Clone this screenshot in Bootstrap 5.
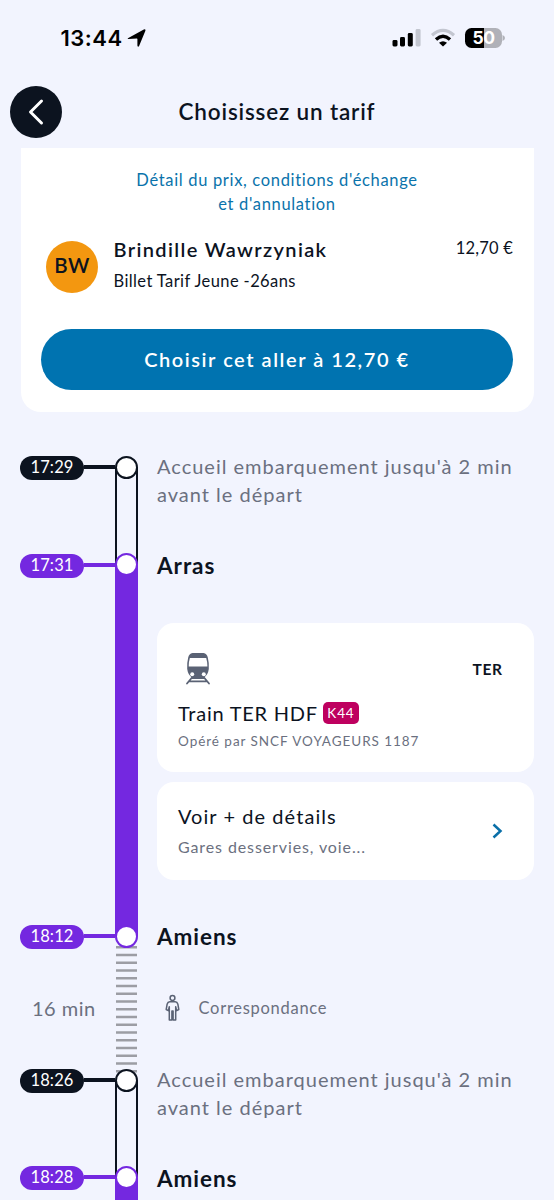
<!DOCTYPE html>
<html lang="fr">
<head>
<meta charset="utf-8">
<meta name="viewport" content="width=device-width, initial-scale=1">
<title>Choisissez un tarif</title>
<link rel="stylesheet" href="https://cdn.jsdelivr.net/npm/bootstrap@5.3.0/dist/css/bootstrap.min.css">
<style>
  :root { --ink:#0c131f; --violet:#7428e0; --blue:#0073b0; --slate:#6b7080; --page:#f2f4fe; }
  body { background:var(--page); color:var(--ink); font-family:Lato,"Open Sans",sans-serif; height:1200px; overflow:hidden; }
  .status { height:75px; padding:0 49px 0 60.5px; color:#000; }
  .clock { font:600 22px/26px Inter,sans-serif; letter-spacing:.5px; }
  .battery { font:700 17.5px/20px Inter,sans-serif; letter-spacing:-.4px; width:37px; height:20px; border-radius:6.5px; background:linear-gradient(90deg,#000 51%,#b0b1b8 51%); color:#fff; }
  .topbar { height:73px; padding:0 10px; grid-template-columns:52px 1fr 52px; }
  .back { width:52px; height:52px; background:var(--ink); }
  .title { font-size:22.5px; font-weight:600; letter-spacing:.83px; line-height:28px; }
  .fare { margin:0 20.5px; height:263.5px; padding:21px 20.5px 0; border-radius:0 0 20px 20px; }
  .conditions { color:#0a73ab; font-size:16.5px; line-height:23.5px; letter-spacing:.67px; }
  .passenger { margin-top:21.5px; padding-left:5px; height:55px; }
  .avatar { width:52px; height:52px; margin:3px 15.5px 0 0; padding-bottom:2px; background:#f39710; font-size:20.5px; font-weight:600; letter-spacing:.5px; }
  .who { font-size:20px; font-weight:600; line-height:24px; letter-spacing:1.35px; margin-top:-1px; }
  .fare-name { font-size:16.5px; line-height:22px; letter-spacing:.4px; margin-top:9px; }
  .price { font-size:16.5px; line-height:20px; letter-spacing:.2px; }
  .choose { margin-top:36px; height:61.5px; background:var(--blue); font-size:20px; font-weight:600; letter-spacing:1.55px; }
  .journey { margin:44.5px 20.5px 0 20px; }
  .stop-row { display:grid; grid-template-columns:95px 23px 1fr; }
  .pill { width:64px; height:23.5px; font-size:16.5px; line-height:23px; letter-spacing:.15px; background:var(--tone); flex:none; }
  .link-bar { height:4px; background:var(--tone); }
  .rail { position:relative; }
  .rail::before { content:""; position:absolute; left:0; right:0; top:11px; bottom:-11px; }
  .knob { position:relative; width:23px; height:23px; border:2.5px solid var(--tone); background:#fff; }
  .dark { --tone:var(--ink); } .violet { --tone:var(--violet); }
  .tube::before { border:solid var(--ink); border-width:0 2px; }
  .full::before { background:var(--violet); }
  .ties svg { position:absolute; left:1px; top:20.5px; }
  .body-col { padding-left:19px; }
  .note { color:var(--slate); font-size:20px; line-height:28.2px; letter-spacing:1px; margin-top:-4.5px; }
  .city { font-size:22.5px; font-weight:700; line-height:28px; letter-spacing:.95px; }
  .leg { border-radius:17px; padding:0 21px; }
  .product { font-size:20px; line-height:24px; letter-spacing:.75px; }
  .line-tag { background:#be005f; width:36.5px; height:22px; border-radius:5px; font-size:13.5px; letter-spacing:.9px; margin-left:5px; }
  .operator { color:var(--slate); font-size:13.5px; line-height:18px; letter-spacing:.96px; }
  .brand { font-size:15.5px; font-weight:700; letter-spacing:.6px; padding-top:2px; }
  .more { font-size:20px; line-height:26px; letter-spacing:1.06px; }
  .served { color:var(--slate); font-size:16px; line-height:22px; letter-spacing:.89px; }
  .wait { color:var(--slate); font-size:20px; line-height:24px; letter-spacing:.5px; }
  .change { color:var(--slate); font-size:16.5px; line-height:24px; letter-spacing:.72px; }
</style>
</head>
<body>
<header>
  <div class="status d-flex align-items-center">
    <span class="clock">13:44</span>
    <svg style="margin-left:4.5px" width="20" height="20" viewBox="0 0 20 20"><path d="M.9 10.200 16.800 1.400q2.200-.9 1.600 1.300L12.100 18q-1.200 1.800-1.700-.5V11q0-.6-.6-.6L1.500 11q-1.500-.2-.6-.8Z" fill="#000"/></svg>
    <svg class="ms-auto" width="29" height="19" viewBox="0 0 29 19"><g fill="#000"><rect x=".5" y="12" width="5" height="6.5" rx="1.4"/><rect x="8" y="9" width="5" height="9.5" rx="1.4"/><rect x="15.8" y="5" width="5" height="13.500" rx="1.4"/></g><rect x="23.600" y="1" width="5" height="17.500" rx="1.4" fill="#c3c6d0"/></svg>
    <svg style="margin-left:9px" width="26" height="19" viewBox="0 0 26 19" fill="none"><path d="M2 7.200Q13-2.500 24 7.200" stroke="#c3c6d0" stroke-width="3.200"/><path d="M6 11.400Q13 5 20 11.400" stroke="#000" stroke-width="3.400"/><path d="M9 14.800Q13 11.600 17 14.800L13 18.600Z" fill="#000"/></svg>
    <div class="battery d-flex align-items-center justify-content-center" style="margin-left:9px">50</div>
    <svg width="3" height="8" viewBox="0 0 3 8"><path d="M.5 1Q3 2 3 4T.5 7Z" fill="#b0b1b8"/></svg>
  </div>
  <div class="topbar d-grid align-items-center">
    <button class="back btn p-0 border-0 rounded-circle d-flex align-items-center justify-content-center" aria-label="Retour">
      <svg width="20" height="28" viewBox="0 0 20 28" fill="none" stroke="#fff" stroke-width="3" stroke-linecap="round" stroke-linejoin="round"><path d="M15.500 3 4.500 14l11 11"/></svg>
    </button>
    <h1 class="title text-center m-0">Choisissez un tarif</h1>
  </div>
</header>
<main>
  <section class="fare bg-white">
    <div class="conditions text-center">Détail du prix, conditions d'échange<br>et d'annulation</div>
    <div class="passenger d-flex align-items-start">
      <div class="avatar rounded-circle d-flex align-items-center justify-content-center">BW</div>
      <div><div class="who">Brindille Wawrzyniak</div><div class="fare-name">Billet Tarif Jeune -26ans</div></div>
      <div class="price ms-auto">12,70 €</div>
    </div>
    <button class="choose btn w-100 rounded-pill border-0 text-white p-0">Choisir cet aller à 12,70 €</button>
  </section>

  <section class="journey">
    <div class="stop-row" style="height:97px">
      <div class="dark d-flex align-items-start"><span class="pill rounded-pill text-white text-center">17:29</span><span class="link-bar flex-fill" style="margin-top:9px"></span></div>
      <div class="rail tube dark"><div class="knob rounded-circle"></div></div>
      <div class="body-col"><p class="note mb-0">Accueil embarquement jusqu'à 2 min<br>avant le départ</p></div>
    </div>
    <div class="stop-row" style="height:372px">
      <div class="violet d-flex align-items-start"><span class="pill rounded-pill text-white text-center" style="margin-top:1px">17:31</span><span class="link-bar flex-fill" style="margin-top:9.500px"></span></div>
      <div class="rail full violet"><div class="knob rounded-circle"></div></div>
      <div class="body-col">
        <div class="city" style="margin:-1px 0 42.500px">Arras</div>
        <div class="leg bg-white" style="height:149px;padding-top:29px">
          <div class="d-flex justify-content-between align-items-center" style="height:34px;margin-right:10px">
            <svg style="margin-left:7px" width="27" height="34" viewBox="0 0 27 34">
              <path d="M7.500 1h11q3.500.5 4.300 4.500 1.500 6 1 11.500-.8 6-4.800 8.500H7q-4-2.500-4.800-8.500-.5-5.500 1-11.500Q4 1.500 7.500 1Z" fill="#5a6274"/>
              <path d="M4.900 6h16.300q1.300 4 1.200 8.500H3.700Q3.500 10 4.900 6Z" fill="#fff"/>
              <circle cx="7.200" cy="22.300" r="2" fill="#fff"/><circle cx="18.800" cy="22.300" r="2" fill="#fff"/>
              <path d="M7 25.500 2 31.500M19 25.500l5 6M7 26h12M4.500 29.300h17" stroke="#5a6274" stroke-width="1.800" stroke-linecap="round"/>
            </svg>
            <span class="brand">TER</span>
          </div>
          <div class="product d-flex align-items-center" style="margin-top:15.500px">Train TER HDF<span class="line-tag text-white d-flex align-items-center justify-content-center">K44</span></div>
          <div class="operator" style="margin-top:6.500px">Opéré par SNCF VOYAGEURS 1187</div>
        </div>
        <div class="leg bg-white d-flex align-items-center justify-content-between" style="height:98px;margin-top:10.500px">
          <div style="margin-top:-2px"><div class="more">Voir + de détails</div><div class="served" style="margin-top:7px">Gares desservies, voie...</div></div>
          <svg style="margin-right:9px" width="13" height="18" viewBox="0 0 13 18" fill="none" stroke="#0a6fa8" stroke-width="2.500"><path d="m2.500 2.500 7 6.500-7 6.500"/></svg>
        </div>
      </div>
    </div>
    <div class="stop-row" style="height:144px">
      <div class="violet"><div class="d-flex align-items-start"><span class="pill rounded-pill text-white text-center">18:12</span><span class="link-bar flex-fill" style="margin-top:9px"></span></div><div class="wait" style="margin:47px 0 0 12px">16 min</div></div>
      <div class="rail ties violet"><svg width="21" height="127" viewBox="0 0 21 127"><path d="M10.500 0v127" stroke="#9c9da4" stroke-width="21" stroke-dasharray="2.400 5.350"/></svg><div class="knob rounded-circle"></div></div>
      <div class="body-col">
        <div class="city" style="margin-top:-2.500px">Amiens</div>
        <div class="d-flex align-items-center" style="margin-top:43.500px;padding-left:8px">
          <svg width="15" height="28" viewBox="0 0 15 28" fill="none" stroke="#5a6274" stroke-width="1.500" stroke-linejoin="round" stroke-linecap="round"><circle cx="7.500" cy="4" r="2.400"/><path d="M4.800 7.800h5.400q2 .1 2.700 2.500l.9 5.200-2.200 1.200-.9-4V26H8.100v-9H6.900v9H4.300V12.700l-.9 4-2.200-1.200.9-5.200q.7-2.400 2.700-2.500Z"/></svg>
          <span class="change" style="margin-left:18.500px">Correspondance</span>
        </div>
      </div>
    </div>
    <div class="stop-row" style="height:97px">
      <div class="dark d-flex align-items-start"><span class="pill rounded-pill text-white text-center">18:26</span><span class="link-bar flex-fill" style="margin-top:9px"></span></div>
      <div class="rail tube dark"><div class="knob rounded-circle"></div></div>
      <div class="body-col"><p class="note mb-0">Accueil embarquement jusqu'à 2 min<br>avant le départ</p></div>
    </div>
    <div class="stop-row" style="height:80px">
      <div class="violet d-flex align-items-start"><span class="pill rounded-pill text-white text-center">18:28</span><span class="link-bar flex-fill" style="margin-top:9px"></span></div>
      <div class="rail full violet"><div class="knob rounded-circle"></div></div>
      <div class="body-col"><div class="city" style="margin-top:-1.500px">Amiens</div></div>
    </div>
  </section>
</main>
<script src="https://cdn.jsdelivr.net/npm/bootstrap@5.3.0/dist/js/bootstrap.bundle.min.js"></script>
</body>
</html>
